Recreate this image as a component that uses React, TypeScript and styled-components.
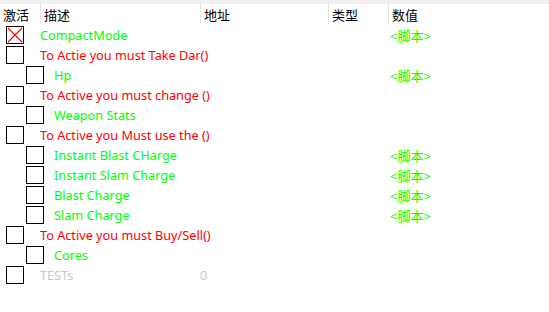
import React from 'react'
import styled, { createGlobalStyle } from 'styled-components'

const Global = createGlobalStyle`
  html, body {
    margin: 0;
    padding: 0;
    background: #ffffff;
  }
  body {
    font-family: "Segoe UI", "Noto Sans", "Noto Sans CJK SC", sans-serif;
  }
`

type Entry = {
  label: string
  level: 0 | 1
  color: 'green' | 'red' | 'grey'
  value?: string
  address?: string
  checked?: boolean
}

const entries: Entry[] = [
  { label: 'CompactMode', level: 0, color: 'green', value: '<脚本>', checked: true },
  { label: 'To Actie you must Take Dar()', level: 0, color: 'red' },
  { label: 'Hp', level: 1, color: 'green', value: '<脚本>' },
  { label: 'To Active you must change ()', level: 0, color: 'red' },
  { label: 'Weapon Stats', level: 1, color: 'green' },
  { label: 'To Active you Must use the ()', level: 0, color: 'red' },
  { label: 'Instant Blast CHarge', level: 1, color: 'green', value: '<脚本>' },
  { label: 'Instant Slam Charge', level: 1, color: 'green', value: '<脚本>' },
  { label: 'Blast Charge', level: 1, color: 'green', value: '<脚本>' },
  { label: 'Slam Charge', level: 1, color: 'green', value: '<脚本>' },
  { label: 'To Active you must Buy/Sell()', level: 0, color: 'red' },
  { label: 'Cores', level: 1, color: 'green' },
  { label: 'TESTs', level: 0, color: 'grey', address: '0' },
]

const colors = {
  green: '#00ff00',
  red: '#ff0000',
  grey: '#c8c8c8',
}

const App = () => {
  return (
    <>
      <Global />
      <Table>
        <TopBand />
        <Header>
          <HeadCell>激活</HeadCell>
          <HeadCell sep>描述</HeadCell>
          <HeadCell sep>地址</HeadCell>
          <HeadCell sep>类型</HeadCell>
          <HeadCell sep>数值</HeadCell>
        </Header>
        <Body>
          {entries.map((e, i) => (
            <Row key={i}>
              <DescCell>
                <BoxSlot level={e.level}>
                  <Check level={e.level}>
                    {e.checked && (
                      <svg width="16" height="16" viewBox="0 0 16 16">
                        <path d="M1 1 L15 15 M15 1 L1 15" stroke="#ff0000" strokeWidth="1.1" fill="none" />
                      </svg>
                    )}
                  </Check>
                </BoxSlot>
                <Label color={colors[e.color]}>{e.label}</Label>
              </DescCell>
              <Cell color={colors[e.color]}>{e.address}</Cell>
              <Cell />
              <Value>{e.value}</Value>
            </Row>
          ))}
        </Body>
      </Table>
    </>
  )
}

export default App

const Table = styled.div`
  width: 549px;
  height: 312px;
  background: #ffffff;
  overflow: hidden;
`

const TopBand = styled.div`
  height: 4px;
  background: #f0f0f0;
`

const Header = styled.div`
  display: grid;
  grid-template-columns: 40px 160px 128px 60px 1fr;
  height: 20px;
  background: #ffffff;
`

const HeadCell = styled.div<{ sep?: boolean }>`
  display: flex;
  align-items: center;
  padding-left: 3px;
  font-size: 13px;
  color: #000000;
  border-left: ${(p) => (p.sep ? '1px solid #e5e5e5' : 'none')};
`

const Body = styled.div`
  display: flex;
  flex-direction: column;
  padding-top: 1px;
`

const Row = styled.div`
  display: grid;
  grid-template-columns: 200px 128px 61px 1fr;
  height: 20px;
  align-items: center;
`

const DescCell = styled.div`
  display: flex;
  align-items: center;
  height: 20px;
  white-space: nowrap;
`

const BoxSlot = styled.div<{ level: number }>`
  display: flex;
  align-items: center;
  width: ${(p) => (p.level ? 54 : 40)}px;
  flex-shrink: 0;
`

const Check = styled.div<{ level: number }>`
  box-sizing: border-box;
  width: 18px;
  height: 18px;
  margin-left: ${(p) => (p.level ? 26 : 6)}px;
  border: 1px solid #000000;
  background: #ffffff;
  display: flex;
  svg {
    display: block;
  }
`

const Label = styled.span<{ color: string }>`
  font-size: 12.7px;
  color: ${(p) => p.color};
`

const Cell = styled.div<{ color?: string }>`
  font-size: 12.7px;
  color: ${(p) => p.color || '#000'};
`

const Value = styled.div`
  font-size: 13px;
  color: #00ff00;
  padding-left: 1px;
`
